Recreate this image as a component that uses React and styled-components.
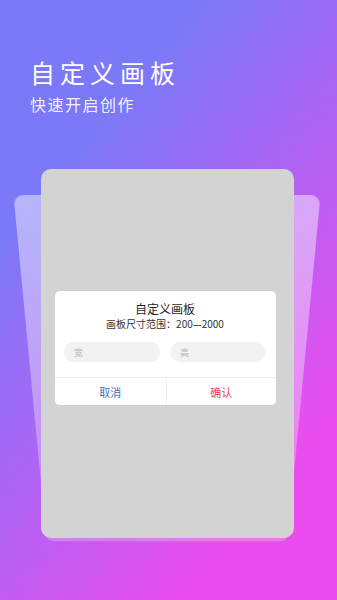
import React from "react";
import styled, { createGlobalStyle } from "styled-components";

const GlobalStyle = createGlobalStyle`
  html, body {
    margin: 0;
    padding: 0;
  }
  body {
    font-family: "Noto Sans CJK SC", "Noto Sans", sans-serif;
  }
`;

const Page = styled.div`
  width: 337px;
  height: 600px;
  overflow: hidden;
  background: linear-gradient(130deg, #7b79f7 24%, #eb4cef 82%);
`;

const Header = styled.header`
  padding: 56px 0 0 30px;
  color: #fff;
`;

const Title = styled.h1`
  margin: 0;
  font-size: 25px;
  line-height: 32px;
  font-weight: 400;
  letter-spacing: 5px;
`;

const Subtitle = styled.p`
  margin: 5px 0 0;
  font-size: 16px;
  line-height: 22px;
  letter-spacing: 1.5px;
  color: rgba(255, 255, 255, 0.9);
`;

const Stage = styled.div`
  position: relative;
  margin-top: 54px;
`;

// the tilted, see-through sheet peeking out behind the canvas
const Ghost = styled.div`
  position: absolute;
  top: 11px;
  left: 31.5px;
  width: 270px;
  height: 418px;
  border-radius: 9px;
  background: linear-gradient(
    180deg,
    rgba(255, 255, 255, 0.45),
    rgba(255, 255, 255, 0.22)
  );
  transform: perspective(1000px) rotateX(-35.25deg);
`;

const Canvas = styled.div`
  position: relative;
  z-index: 1;
  box-sizing: border-box;
  width: 253px;
  height: 369px;
  margin-left: 41px;
  padding: 122px 0 0 14px;
  border-radius: 10px;
  background: #d3d3d3;
`;

const Dialog = styled.div`
  width: 221px;
  border-radius: 5px;
  background: #fff;
  overflow: hidden;
`;

const DialogBody = styled.div`
  padding: 12px 10px 15px 9px;
  text-align: center;
`;

const DialogTitle = styled.div`
  font-size: 12px;
  line-height: 12px;
  color: #1f1f1f;
`;

const DialogHint = styled.div`
  margin-top: 2px;
  font-size: 10px;
  line-height: 14px;
  color: #333;
`;

const Fields = styled.div`
  display: grid;
  grid-template-columns: 1fr 1fr;
  gap: 10px;
  margin-top: 11px;
`;

const Field = styled.input`
  box-sizing: border-box;
  width: 100%;
  height: 20px;
  padding: 0 10px;
  border: none;
  outline: none;
  border-radius: 10px;
  background: #f2f2f2;
  font-family: inherit;
  font-size: 9px;
  color: #333;

  &::placeholder {
    color: #b5b5b5;
  }
`;

const Actions = styled.div`
  display: grid;
  grid-template-columns: 1fr 1fr;
  border-top: 1px solid #efefef;
`;

const Action = styled.button`
  height: 27px;
  padding: 0;
  border: none;
  background: #fff;
  font-family: inherit;
  font-size: 11px;
  color: ${(p) => (p.$danger ? "#e54646" : "#3d6fbf")};
  border-left: ${(p) => (p.$danger ? "1px solid #f0f0f0" : "none")};
`;

export default function App() {
  return (
    <Page>
      <GlobalStyle />
      <Header>
        <Title>自定义画板</Title>
        <Subtitle>快速开启创作</Subtitle>
      </Header>
      <Stage>
        <Ghost />
        <Canvas>
          <Dialog>
            <DialogBody>
              <DialogTitle>自定义画板</DialogTitle>
              <DialogHint>画板尺寸范围：200—2000</DialogHint>
              <Fields>
                <Field placeholder="宽" />
                <Field placeholder="高" />
              </Fields>
            </DialogBody>
            <Actions>
              <Action>取消</Action>
              <Action $danger>确认</Action>
            </Actions>
          </Dialog>
        </Canvas>
      </Stage>
    </Page>
  );
}
